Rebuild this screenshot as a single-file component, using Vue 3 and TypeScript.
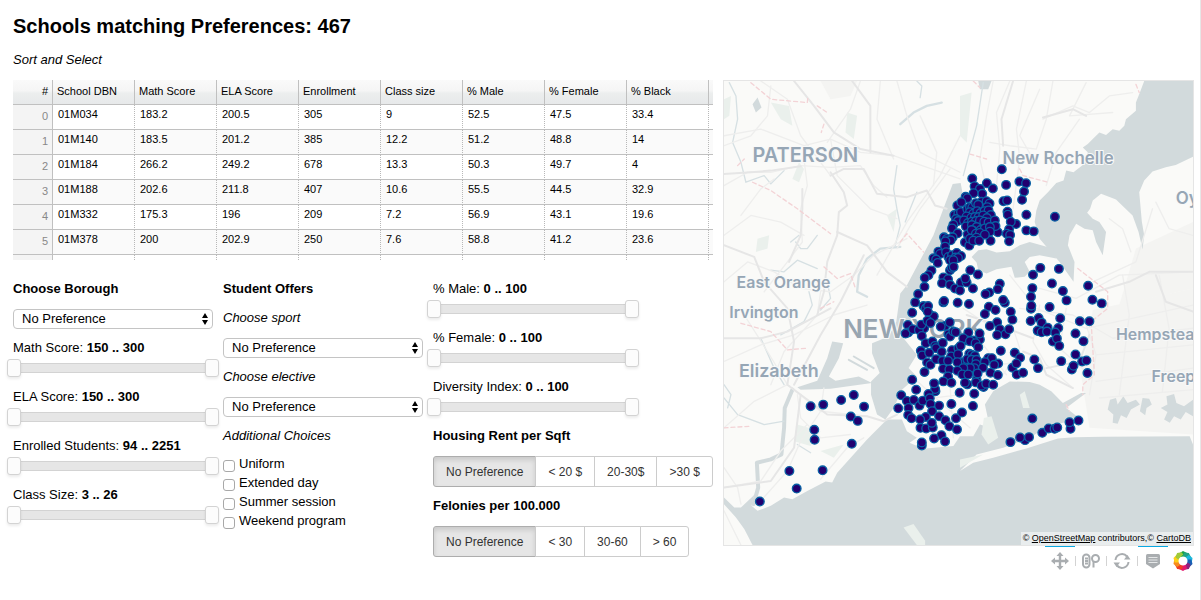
<script setup lang="ts">
import { reactive, ref } from 'vue'

interface RangeFilter {
  id: string
  label: string
  min: number
  max: number
  low: number
  high: number
}

const columns = ['School DBN', 'Math Score', 'ELA Score', 'Enrollment', 'Class size', '% Male', '% Female', '% Black']

const rows: string[][] = [
  ['01M034', '183.2', '200.5', '305', '9', '52.5', '47.5', '33.4'],
  ['01M140', '183.5', '201.2', '385', '12.2', '51.2', '48.8', '14'],
  ['01M184', '266.2', '249.2', '678', '13.3', '50.3', '49.7', '4'],
  ['01M188', '202.6', '211.8', '407', '10.6', '55.5', '44.5', '32.9'],
  ['01M332', '175.3', '196', '209', '7.2', '56.9', '43.1', '19.6'],
  ['01M378', '200', '202.9', '250', '7.6', '58.8', '41.2', '23.6'],
]

const scoreFilters = reactive<RangeFilter[]>([
  { id: 'math', label: 'Math Score', min: 150, max: 300, low: 150, high: 300 },
  { id: 'ela', label: 'ELA Score', min: 150, max: 300, low: 150, high: 300 },
  { id: 'enrolled', label: 'Enrolled Students', min: 94, max: 2251, low: 94, high: 2251 },
  { id: 'class', label: 'Class Size', min: 3, max: 26, low: 3, high: 26 },
])

const shareFilters = reactive<RangeFilter[]>([
  { id: 'male', label: '% Male', min: 0, max: 100, low: 0, high: 100 },
  { id: 'female', label: '% Female', min: 0, max: 100, low: 0, high: 100 },
  { id: 'diversity', label: 'Diversity Index', min: 0, max: 100, low: 0, high: 100 },
])

const borough = ref('No Preference')
const sport = ref('No Preference')
const elective = ref('No Preference')

const extras = reactive([
  { label: 'Uniform', checked: false },
  { label: 'Extended day', checked: false },
  { label: 'Summer session', checked: false },
  { label: 'Weekend program', checked: false },
])

const rentOptions = ['No Preference', '< 20 $', '20-30$', '>30 $']
const felonyOptions = ['No Preference', '< 30', '30-60', '> 60']
const rent = ref(rentOptions[0])
const felonies = ref(felonyOptions[0])

// School positions by district, as x,y pairs relative to the district's origin in map units.
const districts = [
  {
    origin: [510, 255],
    points:
      '336,26 247,54 254,77 291,68 309,84 270,85 349,73 389,63 409,68 403,93 397,118 277,100 251,98 227,109 232,113 202,135 214,125 341,122 352,120 193,164 205,160 213,155 353,154 354,163 410,163 496,169 198,176 204,182 190,193 379,191 363,184 186,204 358,207 324,216 351,220 361,224 358,243 410,210 432,213 302,241 203,219 162,231 188,231 170,236 182,240 166,243 165,259 145,274 150,281 168,276 130,294 138,298 143,308 124,331 115,345 104,353 103,380 84,402 75,427 232,146 240,140 247,141 258,128 275,124 280,140 290,122 299,129 292,140 265,133 240,155 250,160 262,152 272,158 284,152 296,150 230,168 244,172 255,170 266,170 280,165 303,164 291,173 222,180 234,188 246,184 258,182 270,180 283,184 296,186 315,180 228,198 246,194 260,200 248,210 272,209 285,204 317,197 300,200 233,222 245,209 258,220 270,218 300,214 285,223 225,246 238,256 240,235 260,232 250,241 268,241 175,290 186,285 200,278 196,292 180,300 213,287 204,293 190,300 180,330 185,323 191,320 241,330 264,343 160,352 174,357 156,369 180,374 195,385 213,367 230,367 226,355 210,391 249,385 330,371 324,387 298,397 287,402 345,428 340,420 160,427 162,423 203,428 237,432 100,438 107,445 114,438 452,323 508,326 430,344 487,370 428,384 424,410 424,446 425,437 520,393 531,421 480,441',
  },
  { origin: [720, 0], points: '386,632 399,674 427,685' },
  {
    origin: [480, 675],
    points:
      '96,38 150,45 161,49 143,35 327,20 347,30 315,42 393,35 398,59 83,75 84,98 76,101 98,88 132,85 116,90 124,74 125,108 142,62 151,69 195,78 182,80 209,67 352,67 330,78 360,88 377,103 388,88 352,105 453,63 475,93 205,103 210,110 220,95 227,97 265,98 300,119 299,101 262,122 250,115 280,122 270,124 137,130 157,125 165,138 168,145 188,129 122,153 126,167 147,159 185,156 216,151 235,145 242,138 287,130 295,142 363,153 405,159 421,174 398,204 410,191 411,224 430,219 464,179 475,205 141,188 151,195 133,217 168,178 187,183 213,170 204,183 234,163 268,162 275,165 285,168 189,207 208,209 250,187 232,187 265,188 262,178 275,180 290,180 288,193 325,175 336,175 315,187 355,191 343,195 283,205 309,204 270,205 250,205 232,213 247,224 265,224 290,240 293,221 332,219 354,226 204,230 190,245 214,249 166,275 165,268 162,251 262,254 255,249 288,248 311,262 305,258 319,252 340,255 96,240 108,270 63,287 145,283 239,279 283,282 54,326 80,304 101,301 85,325 118,318 128,303 149,296 151,313 177,318 214,313 279,319 84,346 94,356 156,335 137,352 120,360 177,350 196,362 121,385 138,387 158,384 155,370 228,356 246,339 208,380 231,390 184,407 162,417 195,426 125,438 125,429 458,357 392,428 436,422 448,413 421,414',
  },
  {
    origin: [720, 705],
    points:
      '302,25 237,24 246,38 264,53 296,54 234,62 246,67 262,65 287,68 280,95 292,86 299,108 361,34 390,34 348,71 372,94 348,134 305,154 337,179 342,168 368,155 381,152 384,190 248,370 267,357 285,358 293,354 333,358 330,338 357,333',
  },
  {
    origin: [0, 705],
    points:
      '270,290 308,285 362,271 400,256 431,291 391,321 412,334 281,361 282,391 394,403 206,485 306,483 228,538 117,577',
  },
]

const schools = districts.flatMap(({ origin, points }) =>
  points.split(' ').map((pair) => {
    const [x, y] = pair.split(',').map(Number)
    return { x: x + origin[0], y: y + origin[1] }
  }),
)

const places = [
  { name: 'PATERSON', x: 95, y: 260, kind: 'city' },
  { name: 'New Rochelle', x: 848, y: 265, kind: 'town' },
  { name: 'Oy', x: 1370, y: 385, kind: 'town' },
  { name: 'East Orange', x: 47, y: 639, kind: 'small' },
  { name: 'Irvington', x: 25, y: 729, kind: 'small' },
  { name: 'NEW YORK', x: 368, y: 788, kind: 'metro' },
  { name: 'Elizabeth', x: 54, y: 906, kind: 'large' },
  { name: 'Hempstea', x: 1190, y: 796, kind: 'small' },
  { name: 'Freep', x: 1297, y: 921, kind: 'small' },
]

const petals = ['#17a24a', '#20a383', '#1cb8dc', '#1a5fb4', '#8f1f7c', '#e5176c', '#ef3b24', '#f68b1f', '#fdd017', '#9fca3b']
</script>

<template>
  <main class="page">
    <section class="panel">
      <h1>Schools matching Preferences: 467</h1>
      <p class="hint">Sort and Select</p>

      <div class="grid">
        <table>
          <colgroup>
            <col class="col-index" />
            <col v-for="c in columns" :key="c" class="col-data" />
            <col />
          </colgroup>
          <thead>
            <tr>
              <th class="index" scope="col">#</th>
              <th v-for="c in columns" :key="c" scope="col">{{ c }}</th>
              <th class="rest"></th>
            </tr>
          </thead>
          <tbody>
            <tr v-for="(row, i) in rows" :key="i">
              <td class="index">{{ i }}</td>
              <td v-for="(cell, j) in row" :key="j">{{ cell }}</td>
              <td class="rest"></td>
            </tr>
            <tr>
              <td class="index"></td>
              <td v-for="c in columns" :key="c"></td>
              <td class="rest"></td>
            </tr>
          </tbody>
        </table>
      </div>

      <div class="filters">
        <div class="column">
          <label class="line strong" for="borough">Choose Borough</label>
          <div class="pick">
            <select id="borough" v-model="borough">
              <option>No Preference</option>
            </select>
            <svg class="arrows" viewBox="0 0 6 12" aria-hidden="true"><path d="M3 0 6 5H0ZM3 12 0 7H6Z" /></svg>
          </div>
          <div v-for="f in scoreFilters" :key="f.id" class="range">
            <label class="line" :for="f.id">{{ f.label }}: <b>{{ f.low }} .. {{ f.high }}</b></label>
            <div class="slider">
              <input :id="f.id" v-model.number="f.low" type="range" :min="f.min" :max="f.max" />
              <input v-model.number="f.high" type="range" :min="f.min" :max="f.max" :aria-label="f.label + ' maximum'" />
            </div>
          </div>
        </div>

        <div class="column">
          <h2 class="line strong offers">Student Offers</h2>
          <label class="line hint" for="sport">Choose sport</label>
          <div class="pick">
            <select id="sport" v-model="sport">
              <option>No Preference</option>
            </select>
            <svg class="arrows" viewBox="0 0 6 12" aria-hidden="true"><path d="M3 0 6 5H0ZM3 12 0 7H6Z" /></svg>
          </div>
          <label class="line hint" for="elective">Choose elective</label>
          <div class="pick">
            <select id="elective" v-model="elective">
              <option>No Preference</option>
            </select>
            <svg class="arrows" viewBox="0 0 6 12" aria-hidden="true"><path d="M3 0 6 5H0ZM3 12 0 7H6Z" /></svg>
          </div>
          <h2 class="line hint">Additional Choices</h2>
          <div class="checks">
            <label v-for="e in extras" :key="e.label"><input v-model="e.checked" type="checkbox" /><span>{{ e.label }}</span></label>
          </div>
        </div>

        <div class="column">
          <div v-for="f in shareFilters" :key="f.id" class="range">
            <label class="line" :for="f.id">{{ f.label }}: <b>{{ f.low }} .. {{ f.high }}</b></label>
            <div class="slider">
              <input :id="f.id" v-model.number="f.low" type="range" :min="f.min" :max="f.max" />
              <input v-model.number="f.high" type="range" :min="f.min" :max="f.max" :aria-label="f.label + ' maximum'" />
            </div>
          </div>
          <h2 class="line strong">Housing Rent per Sqft</h2>
          <div class="choices">
            <button v-for="o in rentOptions" :key="o" type="button" :class="{ active: rent === o }" :aria-pressed="rent === o" @click="rent = o">{{ o }}</button>
          </div>
          <h2 class="line strong">Felonies per 100.000</h2>
          <div class="choices">
            <button v-for="o in felonyOptions" :key="o" type="button" :class="{ active: felonies === o }" :aria-pressed="felonies === o" @click="felonies = o">{{ o }}</button>
          </div>
        </div>
      </div>
    </section>

    <section class="plot">
      <div class="map">
        <svg viewBox="9 15 1413 1398" role="img" aria-label="Map of schools">
          <rect class="land" x="0" y="0" width="1430" height="1420" />

          <g class="suburb">
            <path d="M1120 705 1422 640V1080L1110 1060 1085 900Z" />
            <path d="M300 15H410L390 60 330 70Z" />
            <path d="M1250 520 1422 440V640L1200 690Z" />
          </g>
          <g class="park">
            <path d="M150 80 205 90 215 150 180 130Z" />
            <path d="M380 110 410 120 400 190 375 170Z" />
            <path d="M235 260 250 280 235 320 215 310Z" />
            <path d="M110 490 145 480 140 520 105 530Z" />
            <path d="M9 70 30 60 25 120 9 130Z" />
            <path d="M720 60 755 50 740 200 720 180Z" />
            <path d="M230 1050 300 1070 270 1115 220 1100Z" />
            <path d="M300 1130 370 1110 340 1150Z" />
            <path d="M500 420 530 400 520 470Z" />
          </g>

          <g class="water">
            <path d="M1275 15 1262 50 1250 80 1250 105 1220 130 1215 150 1200 165 1180 160 1160 178 1140 170 1120 190 1105 205 1090 215 1105 230 1100 252 1090 268 1062 290 1040 285 1032 315 1010 322 985 350 960 375 950 405 945 440 960 490 985 520 1020 560 1062 620 1065 560 1045 510 1050 480 1070 445 1095 460 1120 465 1130 500 1150 540 1160 470 1140 440 1120 430 1103 412 1112 400 1120 375 1145 355 1190 372 1240 420 1258 470 1270 523 1275 480 1268 440 1260 350 1275 315 1300 288 1340 275 1370 268 1422 243V15Z" />
            <path d="M755 545 775 525 800 522 830 532 870 528 900 510 930 500 1000 520 1010 550 960 540 930 545 915 560 930 590 915 605 885 608 875 575 830 582 800 595 775 585 770 562Z" />
            <path d="M698 325 722 322 730 365 700 440 660 520 610 610 580 690 575 740 550 790 590 840 565 880 590 905 545 945 520 1000 495 1035 470 1020 452 960 452 920 478 895 455 835 455 805 505 785 528 740 540 655 560 630 640 480Z" />
            <path d="M335 800 368 805 355 850 325 905 345 918 415 905 455 925 330 942 240 945 230 938 290 918 320 850Z" />
            <path d="M500 1035 440 1095 350 1195 335 1225 315 1222 260 1250 215 1275 190 1270 150 1295 110 1310 92 1295 100 1262 60 1300 40 1300 9 1270V1290L45 1330 70 1365 95 1413H1422V1110L1412 1085 1150 1087 1065 1088 1015 1092 920 1122 820 1150 760 1165 720 1190 770 1140 850 1120 930 1090 985 1055 1050 1040 1072 1025 1040 1000 1100 955 1085 955 1030 985 995 950 960 930 930 922 870 920 845 935 820 950 795 990 810 1060 780 1050 760 1085 720 1085 700 1115 610 1123 568 1105 590 1090 560 1070 545 1035Z" />
            <path d="M95 85 110 65 122 95 105 110Z" />
            <path d="M775 15H815L805 40H780Z" />
            <path d="M1165 1005 1172 975 1190 970 1195 990 1212 965 1225 985 1250 975 1262 990 1235 1005 1222 1030 1205 1022 1195 1048 1180 1045 1182 1020Z" />
            <path d="M1270 970 1290 972 1298 990 1282 1000 1278 1022 1262 1010Z" />
            <path d="M1325 1000 1345 990 1342 965 1365 958 1372 985 1395 995 1422 975V1025L1400 1012 1385 1035 1365 1025 1352 1045 1335 1035 1345 1012Z" />
          </g>

          <g class="stream">
            <path class="wide" d="M215 945 192 1000 190 1060 182 1140 150 1155 108 1165 112 1240 98 1290" />
            <path class="mid" d="M540 145 580 110 620 90 665 80" />
            <path d="M590 15 605 30 600 65" />
            <path d="M25 20 45 60 50 130 35 200 60 260 75 320 130 300 150 325 190 285" />
            <path d="M210 500 235 480M225 500 240 520 260 520 290 480M150 585 190 590 230 555 290 580" />
            <path class="mid" d="M540 515 480 520 440 550 415 600 410 650 440 665" />
            <path d="M530 270 520 340 530 400 540 450 525 510M590 350 570 400 555 440" />
            <path d="M265 650 275 690 250 740 180 780M790 20 770 150 730 300" />
            <path d="M120 790 160 880 190 930M9 970 50 1020 130 1050 190 1040M9 930 30 960 20 1000" />
            <path d="M320 620 330 670 300 705M230 1110 270 1135" />
          </g>

          <g class="road">
            <path d="M9 180 120 160 250 210 330 190 420 230 520 240 720 310" />
            <path d="M120 15 200 70 240 180 330 300M9 330 80 290 150 290 240 270 330 275 420 270 460 330 500 365" />
            <path d="M60 420 120 340 160 310M9 480 90 420 180 440 250 480M250 250 260 330 240 400 245 500 200 560 130 650" />
            <path d="M9 620 80 560 160 590 240 640 330 650 400 600 460 540 560 490" />
            <path d="M480 15 470 130 520 250M530 15 560 120 600 230 720 290M600 120 650 230 640 330" />
            <path d="M720 180 660 300 560 440 470 600M690 280 600 400 530 520" />
            <path d="M300 650 290 720 190 830 150 930M9 860 120 810 220 780 340 720 440 690" />
            <path d="M420 15 390 100 320 200M150 30 140 120 90 180 9 210M330 190 350 300 450 400 530 430" />
            <path d="M70 720 140 830 200 930 300 1010 440 1025M200 930 100 980 9 1060M310 940 300 1010 240 1100 200 1190 120 1280" />
            <path d="M230 960 240 1030 300 1090 390 1080M9 1240 120 1220 180 1130 260 1050M300 1215 380 1120 430 1090" />
            <path d="M820 15 800 120 780 250 800 340M870 15 830 110 840 220 830 330M920 15 890 160 900 250 880 400M960 40 900 180 940 250" />
            <path d="M970 130 1060 90 1110 110 1170 60 1240 50M1000 15 980 130 950 220 870 210 810 200M1080 130 1010 230 980 330M1100 20 1050 120 1180 110" />
            <path d="M1170 430 1210 460 1235 530M1310 380 1350 460 1422 480M1300 400 1250 560 1120 620" />
            <path d="M960 640 1070 670 1200 600 1422 590M870 600 950 700 1100 760 1422 690M900 700 1060 720 1180 790 1422 760" />
            <path d="M960 690 940 800 980 870 1060 940M860 700 900 820 850 900M1090 720 1130 840 1110 960M1130 840 1422 810M1130 920 1422 880M1140 970 1422 945" />
            <path d="M1210 600 1230 720 1200 960M1320 600 1350 760 1330 950M1040 700 1020 820 1110 900" />
            <path d="M600 830 680 870 780 880 900 860M570 900 680 1000 750 1060M560 980 720 960 800 900M650 820 690 930 700 1090" />
            <path d="M730 700 820 760 900 740M700 750 790 810 860 900" />
            <path d="M9 1180 50 1240 60 1290M9 1310 60 1413" />
          </g>
          <g class="highway">
            <path d="M220 15 280 90 340 170 420 220 520 240M395 15 450 90 450 230" />
            <path d="M9 295 90 290 150 285 240 272M330 290 370 350 380 390 355 410 350 480 320 560 310 650 290 720" />
            <path d="M330 300 370 280 430 280 470 355 560 365 620 345 645 390 680 400" />
            <path d="M245 340 245 400 240 480 205 560M350 470 440 510 500 590 560 635" />
            <path d="M9 510 100 545 130 620 200 700 220 800 200 930 320 1020 440 1025 490 1040 530 1020" />
            <path d="M430 540 360 680 300 780 220 930M9 790 120 790 200 770 330 700" />
            <path d="M880 15 845 130 850 210M970 125 1060 100 1100 120M1130 650 1230 620 1290 590 1422 590M1310 600 1340 680 1422 710" />
            <path d="M910 830 960 850 980 900 1060 940M980 880 1080 860 1110 780M740 720 860 760 940 790" />
            <path d="M9 1240 150 1220 220 1120 240 960" />
          </g>
          <g class="border">
            <path d="M90 20 150 70 260 80 262 60M290 90 320 110M310 145 302 170M50 270 70 250" />
            <path d="M95 320 150 345 230 400 330 475M540 500 560 475 610 530" />
            <path d="M310 575 350 610 390 595 405 640M60 745 150 770 200 825 260 820M9 1060 90 1055M300 700 340 680" />
            <path d="M750 235 800 250M900 280 910 300 985 320M1250 25 1260 50" />
            <path d="M1075 580 1165 650 1165 700 1115 740 1125 900 1090 930 1090 960M760 15 780 35M1040 990 1050 1010" />
          </g>

          <g class="island">
            <path d="M792 1030 815 1025 835 1090 805 1110 785 1080Z" />
            <path d="M720 1155 790 1140 720 1180Z" />
            <path d="M550 1360 580 1350 615 1400V1413H590Z" />
            <path d="M900 960 915 950 930 1000 910 1000Z" />
          </g>
          <path class="pier" d="M385 855 440 885M400 845 460 880" />

          <text v-for="p in places" :key="p.name" :class="p.kind" :x="p.x" :y="p.y">{{ p.name }}</text>
          <circle v-for="(s, i) in schools" :key="i" class="school" :cx="s.x" :cy="s.y" r="13" />
        </svg>
        <div class="credit">© <a href="#osm">OpenStreetMap</a> contributors,© <a href="#carto">CartoDB</a></div>
      </div>

      <div class="toolbar">
        <button type="button" class="on" aria-label="Pan">
          <svg viewBox="0 0 18 18"><path d="M9 0 12.500 4H10.200V7.800H14V5.500L18 9 14 12.500V10.200H10.200V14H12.500L9 18 5.500 14H7.800V10.200H4V12.500L0 9 4 5.500V7.800H7.800V4H5.500Z" /></svg>
        </button>
        <button type="button" aria-label="Wheel zoom">
          <svg viewBox="0 0 18 18"><g class="outline"><rect x="1" y="2.500" width="6.500" height="13" rx="3.200" /><circle cx="13.500" cy="6.500" r="3.500" /><path d="M11.500 9.500V15.500M3 6.500H6M3 9H6M3 11.500H6" /></g></svg>
        </button>
        <button type="button" aria-label="Reset">
          <svg viewBox="0 0 18 18"><g class="outline"><path d="M2.500 8A6.500 6.500 0 0 1 14 4.500M15.500 10A6.500 6.500 0 0 1 4 13.500" /></g><path d="M11 7.500H17.500L14.500 3ZM7 10.500H.5L3.500 15Z" /></svg>
        </button>
        <button type="button" class="on" aria-label="Hover">
          <svg viewBox="0 0 18 18"><path d="M2 3.500Q2 2 3.500 2H14.500Q16 2 16 3.500V12L9 16.500 2 12Z" /><path class="gaps" d="M4.500 5.500H13.500M4.500 8H13.500M4.500 10.500H13.500" /></svg>
        </button>
        <a class="logo" href="#bokeh" aria-label="Bokeh">
          <svg viewBox="-10 -10 20 20">
            <path v-for="(color, i) in petals" :key="color" :fill="color" :transform="`rotate(${i * 36})`" d="M-4-7.500 0-10 4-8 4-5 0-4.500-3-4Z" />
          </svg>
        </a>
      </div>
    </section>
  </main>
</template>

<style>
body {
  margin: 0;
  background: #fff;
}
</style>

<style scoped>
.page {
  box-sizing: border-box;
  min-height: 100vh;
  display: grid;
  grid-template-columns: minmax(0, 700px) minmax(0, 1fr);
  column-gap: 10px;
  align-items: start;
  padding: 13px 6px 0 13px;
  border-right: 1px solid #e6e6e6;
  font: 13px/20px "Liberation Sans", Arial, sans-serif;
  color: #000;
}
h1 {
  margin: 0 0 11px;
  font-size: 20px;
  line-height: 26px;
}
h2 {
  margin: 0;
  font-size: 13px;
  font-weight: 400;
}
.hint {
  margin: 0;
  font-style: italic;
}
.grid {
  height: 180px;
  margin-top: 10px;
  overflow: hidden;
}
table {
  width: 100%;
  table-layout: fixed;
  border-collapse: separate;
  border-spacing: 0;
  font-size: 11px;
  line-height: 14px;
}
.col-index {
  width: 40px;
}
.col-data {
  width: 82px;
}
th,
td {
  box-sizing: border-box;
  height: 25px;
  padding: 2px 0 8px 5px;
  border-right: 1px dotted #b8b8b8;
  border-bottom: 1px solid #c0c0c0;
  text-align: left;
  vertical-align: top;
  white-space: nowrap;
}
th {
  padding: 4px 0 6px 4px;
  border-right: 1px solid #c0c0c0;
  background: linear-gradient(#fafafa 0, #f5f5f5 45%, #eceeee 55%, #e7e9ea 100%);
  font-weight: 400;
}
tbody tr:nth-child(even) td {
  background: #fafafa;
}
th.index,
td.index {
  padding: 4px 4px 6px 0;
  border-right: 1px solid #c0c0c0;
  text-align: right;
}
tbody tr td.index {
  background: #f4f4f4;
  color: #888;
}
th.rest,
td.rest {
  padding: 0;
  border-right: 0;
}
.filters {
  display: grid;
  grid-template-columns: repeat(3, 200px);
  gap: 10px;
  margin-top: 19px;
}
.column {
  display: flex;
  flex-direction: column;
}
.line {
  line-height: 20px;
}
.strong {
  font-weight: 700;
}
.offers {
  margin-bottom: 9px;
}
.pick {
  display: grid;
  align-items: center;
  margin: 10px 0 9px;
}
.pick > * {
  grid-area: 1 / 1;
}
select {
  appearance: none;
  width: 100%;
  height: 20px;
  margin: 0;
  padding: 0 16px 0 8px;
  border: 1px solid #c4c4c4;
  border-radius: 4px;
  background: #fff;
  color: #000;
  font: inherit;
  line-height: 18px;
}
.arrows {
  justify-self: end;
  width: 6px;
  height: 12px;
  margin-right: 5px;
  pointer-events: none;
}
.slider {
  display: grid;
  align-items: center;
  height: 8px;
  margin: 5px 0 14px;
  border: 1px solid #d3d3d3;
  border-left: 0;
  border-right: 0;
  background: #e6e6e6;
}
.slider input {
  grid-area: 1 / 1;
  appearance: none;
  width: auto;
  height: 18px;
  margin: -5px -6px;
  background: none;
  pointer-events: none;
}
.slider input::-webkit-slider-thumb {
  appearance: none;
  box-sizing: border-box;
  width: 14px;
  height: 18px;
  border: 1px solid #d3d3d3;
  border-radius: 3px;
  background: #fcfcfc;
  box-shadow: 0 2px 3px rgba(0, 0, 0, 0.08);
  pointer-events: auto;
}
.range .line {
  display: block;
}
.checks {
  display: flex;
  flex-direction: column;
  margin-top: 8px;
}
.checks label {
  display: flex;
  gap: 4px;
  line-height: 19px;
}
.checks input {
  appearance: none;
  box-sizing: border-box;
  width: 12px;
  height: 12px;
  margin: 6px 0 0;
  border: 1px solid #a8a8a8;
  border-radius: 3px;
  background: #fff;
}
.checks input:checked {
  background: #3b82f6;
}
.choices {
  display: flex;
  margin: 10px 0 9px;
}
.choices button {
  height: 31px;
  margin: 0 0 0 -1px;
  padding: 0 12px;
  border: 1px solid #ccc;
  background: #fff;
  color: #333;
  font: 12px/18px "Liberation Sans", Arial, sans-serif;
  white-space: nowrap;
}
.choices button:first-child {
  margin-left: 0;
  border-radius: 3px 0 0 3px;
}
.choices button:last-child {
  border-radius: 0 3px 3px 0;
}
.choices .active {
  border-color: #adadad;
  background: #e6e6e6;
  box-shadow: inset 0 3px 5px rgba(0, 0, 0, 0.125);
}
.plot {
  margin-top: 67px;
}
.map {
  position: relative;
  border-right: 1px solid #e5e5e5;
}
.map > svg {
  display: block;
  width: 100%;
  box-sizing: border-box;
  border: 1px solid #e5e5e5;
  border-right: 0;
}
.land {
  fill: #fafaf8;
}
.suburb {
  fill: #f4f4f2;
}
.park,
.island {
  fill: #eaf0ec;
}
.water {
  fill: #d2dadc;
}
.stream,
.road,
.highway,
.border,
.pier {
  fill: none;
  stroke-linejoin: round;
  stroke-linecap: round;
}
.stream {
  stroke: #d6e0e3;
  stroke-width: 4;
}
.stream .mid {
  stroke-width: 7;
}
.stream .wide {
  stroke: #d2dadc;
  stroke-width: 12;
}
.road {
  stroke: #eeeeed;
  stroke-width: 4;
}
.highway {
  stroke: #e6e6e6;
  stroke-width: 6;
}
.border {
  stroke: #f3d3d6;
  stroke-width: 4;
  stroke-dasharray: 12 9;
}
.pier {
  stroke: #d2dadc;
  stroke-width: 6;
}
text {
  font-family: Inter, "Open Sans", sans-serif;
  font-weight: 600;
  fill: #96a6b5;
  stroke: #f8f9f9;
  stroke-width: 6;
  paint-order: stroke;
}
.city {
  font-size: 60px;
}
.metro {
  font-size: 78px;
  fill: #98a5b0;
}
.large {
  font-size: 54px;
}
.town {
  font-size: 51px;
}
.small {
  font-size: 48px;
}
.school {
  fill: #22006f;
  stroke: #0760a4;
  stroke-width: 4;
}
.credit {
  position: absolute;
  right: 0;
  bottom: 1px;
  padding: 0 2px;
  background: rgba(255, 255, 255, 0.5);
  font-size: 9px;
  line-height: 13px;
  white-space: nowrap;
}
.credit a {
  color: inherit;
  text-decoration: underline;
}
.toolbar {
  display: flex;
  justify-content: flex-end;
  margin-top: -1px;
}
.toolbar button {
  display: grid;
  place-items: center;
  box-sizing: border-box;
  width: 31px;
  height: 31px;
  padding: 1px 1px 0 0;
  border: 0;
  background: linear-gradient(#d3d3d3, #d3d3d3) right 11px / 1px 10px no-repeat;
}
.toolbar .on {
  background: linear-gradient(#0ba9e2, #0ba9e2) left top / 30px 2px no-repeat, linear-gradient(#d3d3d3, #d3d3d3) right 11px / 1px 10px no-repeat;
}
.toolbar button:nth-of-type(4) {
  background: linear-gradient(#0ba9e2, #0ba9e2) left top / 30px 2px no-repeat;
}
.toolbar button svg {
  width: 18px;
  height: 18px;
  fill: #a9adb0;
}
.outline {
  fill: none;
  stroke: #a9adb0;
  stroke-width: 2;
}
.gaps {
  stroke: #e4e6e7;
  stroke-width: 1;
}
.logo {
  padding: 6px 0 0 4px;
  margin-right: 1px;
}
.logo svg {
  display: block;
  width: 20px;
  height: 20px;
}
</style>
